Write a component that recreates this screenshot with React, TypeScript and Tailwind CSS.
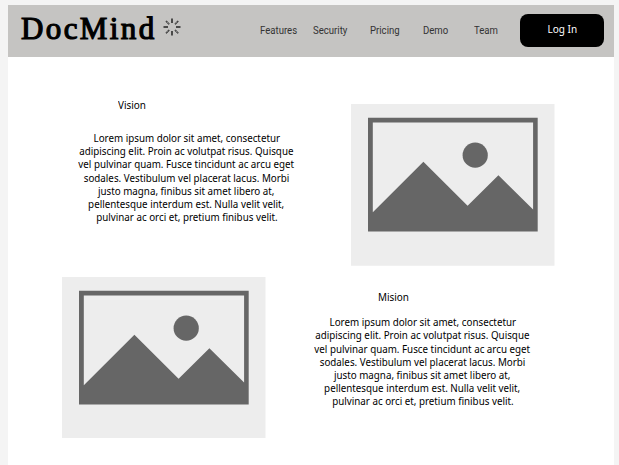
const lines = [
  'Lorem ipsum dolor sit amet, consectetur',
  'adipiscing elit. Proin ac volutpat risus. Quisque',
  'vel pulvinar quam. Fusce tincidunt ac arcu eget',
  'sodales. Vestibulum vel placerat lacus. Morbi',
  'justo magna, finibus sit amet libero at,',
  'pellentesque interdum est. Nulla velit velit,',
  'pulvinar ac orci et, pretium finibus velit.',
];

function Placeholder({ className }: { className: string }) {
  return (
    <svg viewBox="0 0 203.5 161.7" className={`block h-[161.7px] w-[203.5px] shrink-0 ${className}`}>
      <path fill="#ededed" d="M0 0H203.5V161.7H0Z" />
      <path
        fillRule="evenodd"
        fill="#666"
        d="M17 13.7H186.7V127.6H17ZM21.8 18.6V108.2L72.4 57.8L116.6 101.8L147.4 71.3L182.1 105.6V18.6Z"
      />
      <circle cx="124.2" cy="51.2" r="12.6" fill="#666" />
    </svg>
  );
}

function Paragraph() {
  return (
    <div className="flex w-[215px] flex-col items-center text-[11px] leading-[13.2px]">
      {lines.map((line) => (
        <span key={line} className="origin-center scale-x-[0.89] whitespace-nowrap">{line}</span>
      ))}
    </div>
  );
}

function Spark() {
  return (
    <svg viewBox="0 0 18 18" className="ml-[7px] mt-[-8px] h-[18px] w-[18px]" stroke="#222" strokeWidth="1.5" fill="none">
      <path d="M9 .5V5M9 13V17.5M.5 9H5M13 9H17.5M3 3L6.2 6.2M12 12L15.2 15.2M3 15.2L6.2 12M12 6.2L15.2 3" />
      <path stroke="#c5c4c2" strokeWidth=".6" d="M3.6 3.6L5.7 5.7M12.5 12.5L14.6 14.6M3.6 14.6L5.7 12.5M12.5 5.7L14.6 3.6" />
    </svg>
  );
}

function NavItem({ label, className }: { label: string; className: string }) {
  return (
    <a className={`shrink-0 whitespace-nowrap ${className}`}>
      <span className="inline-block origin-left scale-x-[0.82]">{label}</span>
    </a>
  );
}

export default function App() {
  return (
    <div className="h-[465px] w-[619px] overflow-hidden bg-[#f4f4f4] pl-2 pt-[5px] font-['Noto_Sans',sans-serif] text-black">
      <div className="h-[460px] w-[605.5px] bg-white">
        <header className="flex h-[52px] items-center bg-[#c5c4c2]">
          <div className="flex w-[252px] shrink-0 items-center pl-[13px]">
            <h1 className="mt-[-6px] w-[135px] whitespace-nowrap font-['Liberation_Serif',serif] text-[31px] leading-none tracking-[2.4px] [-webkit-text-stroke:1.2px_black]">DocMind</h1>
            <Spark />
          </div>
          <nav className="flex w-[260px] shrink-0 font-['Roboto',sans-serif] text-[11.7px] text-[#333]">
            <NavItem label="Features" className="w-[53px]" />
            <NavItem label="Security" className="w-[57px]" />
            <NavItem label="Pricing" className="w-[53px]" />
            <NavItem label="Demo" className="w-[51px]" />
            <NavItem label="Team" className="w-[40px]" />
          </nav>
          <button className="mt-[-1px] h-[33px] w-[84px] shrink-0 rounded-lg bg-black pb-0.5 text-[11px] text-white">
            <span className="inline-block scale-x-[0.91]">Log In</span>
          </button>
        </header>
        <main>
          <section className="flex">
            <div className="w-[343px] shrink-0 pl-[71px] pt-[41px]">
              <h2 className="pl-[38.5px] text-[11px] leading-[14px]"><span className="inline-block origin-left scale-x-[0.9]">Vision</span></h2>
              <div className="pt-[19px]"><Paragraph /></div>
            </div>
            <Placeholder className="mt-[47px]" />
          </section>
          <section className="flex pt-[11px]">
            <Placeholder className="ml-[54px]" />
            <div className="pl-[49.5px] pt-[13px]">
              <h2 className="pl-[62.5px] text-[11px] leading-[14px]"><span className="inline-block origin-left scale-x-[0.9]">Mision</span></h2>
              <div className="pt-[11.5px]"><Paragraph /></div>
            </div>
          </section>
        </main>
      </div>
    </div>
  );
}
